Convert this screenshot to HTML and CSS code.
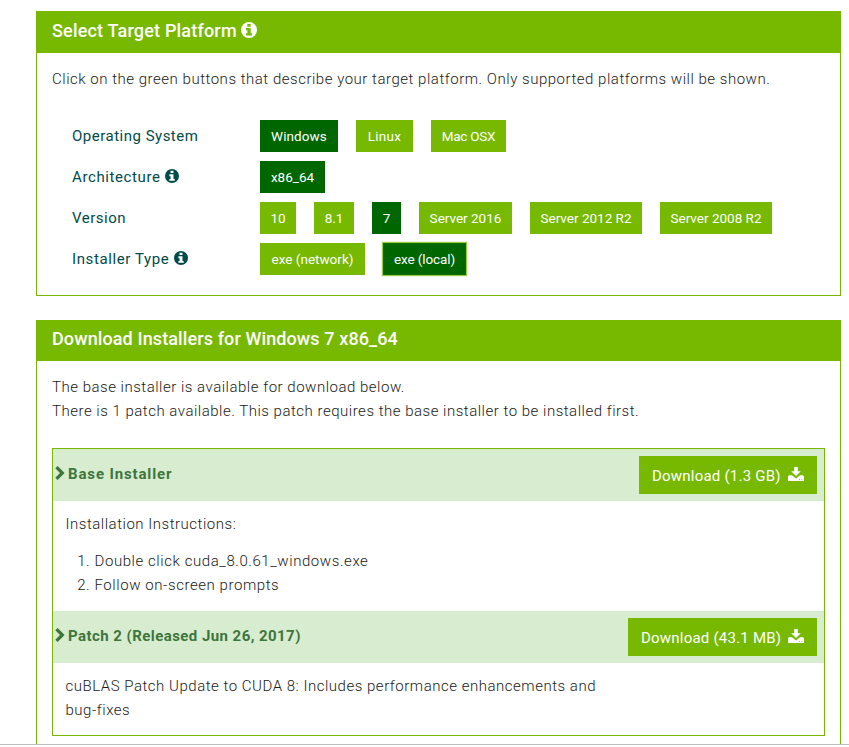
FILE: index.html
```html
<!DOCTYPE html>
<html lang="en">
<head>
<meta charset="utf-8">
<title>Select Target Platform</title>
<link rel="stylesheet" href="styles.css">
</head>
<body>
<svg class="symbols" aria-hidden="true">
  <symbol id="info" viewBox="0 0 16 16"><path fill-rule="evenodd" d="M8 0a8 8 0 1 0 0 16A8 8 0 0 0 8 0ZM6.3 2h3.4v2.7H6.3ZM5 6h4.7v5.3h1.4v2.2H5v-2.2h1.4V8.2H5Z"/></symbol>
  <symbol id="chevron" viewBox="0 0 10 14"><path d="M2.6 0 9.6 7l-7 7L.3 11.7 5 7 .3 2.3Z"/></symbol>
  <symbol id="download" viewBox="0 0 16 14"><path d="M6.2 0h3.6v4.2h3L8 9 3.2 4.2h3Z"/><path fill-rule="evenodd" d="M1 8.3h3L8 11.5l4-3.2h3l1 1V14H0V9.3ZM11 12v.8h1V12Zm2.3 0v.8h1V12Z"/></symbol>
</svg>
<main class="page">
  <section class="panel platform">
    <h2 class="panel-title"><span class="t-select">Select Target Platform</span><svg class="info"><use href="#info"/></svg></h2>
    <div class="panel-body">
      <p class="intro">Click on the green buttons that describe your target platform. Only supported platforms will be shown.</p>
      <div class="options">
        <div class="row"><div class="label"><span>Operating System</span></div><a class="btn active w-windows">Windows</a><a class="btn w-linux">Linux</a><a class="btn w-mac">Mac OSX</a></div>
        <div class="row"><div class="label"><span class="l-arch">Architecture</span><svg class="info"><use href="#info"/></svg></div><a class="btn active w-x86">x86_64</a></div>
        <div class="row"><div class="label"><span>Version</span></div><a class="btn w-10">10</a><a class="btn w-81">8.1</a><a class="btn active w-7">7</a><a class="btn w-2016">Server 2016</a><a class="btn w-r2">Server 2012 R2</a><a class="btn w-r2">Server 2008 R2</a></div>
        <div class="row"><div class="label"><span class="l-type">Installer Type</span><svg class="info"><use href="#info"/></svg></div><a class="btn w-network">exe (network)</a><a class="btn active focused w-local">exe (local)</a></div>
      </div>
    </div>
  </section>
  <section class="panel downloads">
    <h2 class="panel-title"><span class="t-download">Download Installers for Windows 7 x86_64</span></h2>
    <div class="panel-body">
      <p class="summary">The base installer is available for download below.<br>There is 1 patch available. This patch requires the base installer to be installed first.</p>
      <div class="installers">
        <div class="bar"><svg class="chevron"><use href="#chevron"/></svg><h3 class="h-base">Base Installer</h3><a class="download d-base"><span>Download (1.3 GB)</span><svg><use href="#download"/></svg></a></div>
        <div class="details instructions">
          <p>Installation Instructions:</p>
          <ol><li>Double click cuda_8.0.61_windows.exe</li><li>Follow on-screen prompts</li></ol>
        </div>
        <div class="bar"><svg class="chevron"><use href="#chevron"/></svg><h3 class="h-patch">Patch 2 (Released Jun 26, 2017)</h3><a class="download d-patch"><span>Download (43.1 MB)</span><svg><use href="#download"/></svg></a></div>
        <div class="details patch"><p>cuBLAS Patch Update to CUDA 8: Includes performance enhancements and<br>bug-fixes</p></div>
      </div>
    </div>
  </section>
</main>
</body>
</html>
```
FILE: styles.css
```css
* { box-sizing: border-box; }
html { background: #fff; }
body { margin: 0; font: 300 15px/24px Roboto, "Liberation Sans", sans-serif; color: #1a1a1a; letter-spacing: .5px; }
h2, h3, p, ol { margin: 0; padding: 0; }
svg { fill: currentColor; flex: none; }
.symbols { display: none; }
.page { display: flex; flex-direction: column; gap: 24px; height: 745px; padding: 11px 8px 0 36px; border-bottom: 1px solid #c0c0c0; overflow: hidden; }
.panel { flex: none; border: 1px solid #76b900; }
.platform { height: 285px; }
.downloads { height: 440px; }
.panel-title { display: flex; align-items: center; height: 41px; padding: 0 15px 4px; background: #76b900; color: #fff; font-size: 18px; font-weight: 500; line-height: 24px; white-space: nowrap; }
.downloads .panel-title { height: 40px; padding-bottom: 5px; }
.t-select { letter-spacing: .19px; }
.t-download { letter-spacing: .11px; }
.panel-title .info { width: 16px; height: 16px; margin: -1px 0 0 4px; }
.panel-body { padding: 14px 15px 0; white-space: nowrap; }
.intro, .summary { letter-spacing: .52px; }
.summary { letter-spacing: .51px; }
.options { display: grid; gap: 9px; padding: 29px 0 0 20px; }
.row { display: flex; gap: 18px; height: 32px; }
.label { display: flex; align-items: center; width: 170px; color: #004b4b; font-weight: 400; }
.l-arch, .l-type { letter-spacing: .6px; }
.label .info { width: 14px; height: 14px; margin: -2px 0 0 5px; }
.btn { display: flex; align-items: center; justify-content: center; height: 32px; background: #76b900; color: #fff; font-size: 13.5px; font-weight: 400; letter-spacing: 0; }
.active { background: #060; }
.focused { box-shadow: inset 0 0 1px #76b900, 0 0 1px 1px rgba(118, 185, 0, .75); }
.w-windows { width: 78px; letter-spacing: .1px; }
.w-linux { width: 57px; letter-spacing: .3px; }
.w-mac { width: 75px; letter-spacing: -.25px; }
.w-x86 { width: 65px; }
.w-10 { width: 36px; }
.w-81 { width: 40px; }
.w-7 { width: 29px; }
.w-2016 { width: 93px; }
.w-r2 { width: 112px; }
.w-network { width: 105px; }
.w-local { width: 83px; letter-spacing: -.1px; }
.installers { height: 288px; margin-top: 25px; border: 1px solid #76b900; }
.bar { display: flex; align-items: flex-start; height: 52px; padding: 7px 7px 0 2px; background: #d8ecd0; color: #3c763d; }
.chevron { width: 10px; height: 14px; margin-top: 10px; }
.bar h3 { margin: 6px auto 0 3px; font-size: 15px; font-weight: 700; line-height: 24px; }
.bar .h-base { letter-spacing: .86px; }
.bar .h-patch { letter-spacing: .44px; }
.download { display: flex; align-items: center; height: 38px; padding: 2px 13px 0; background: #76b900; color: #fff; font-weight: 400; letter-spacing: .22px; justify-content: space-between; }
.download svg { width: 16px; height: 14px; margin-top: -5px; }
.d-base { width: 178px; }
.d-patch { width: 189px; }
.details { padding: 11px 12px 0 12.5px; letter-spacing: .52px; }
.instructions { height: 110px; }
.instructions ol { margin-top: 13px; padding-left: 29px; letter-spacing: .57px; }
```
